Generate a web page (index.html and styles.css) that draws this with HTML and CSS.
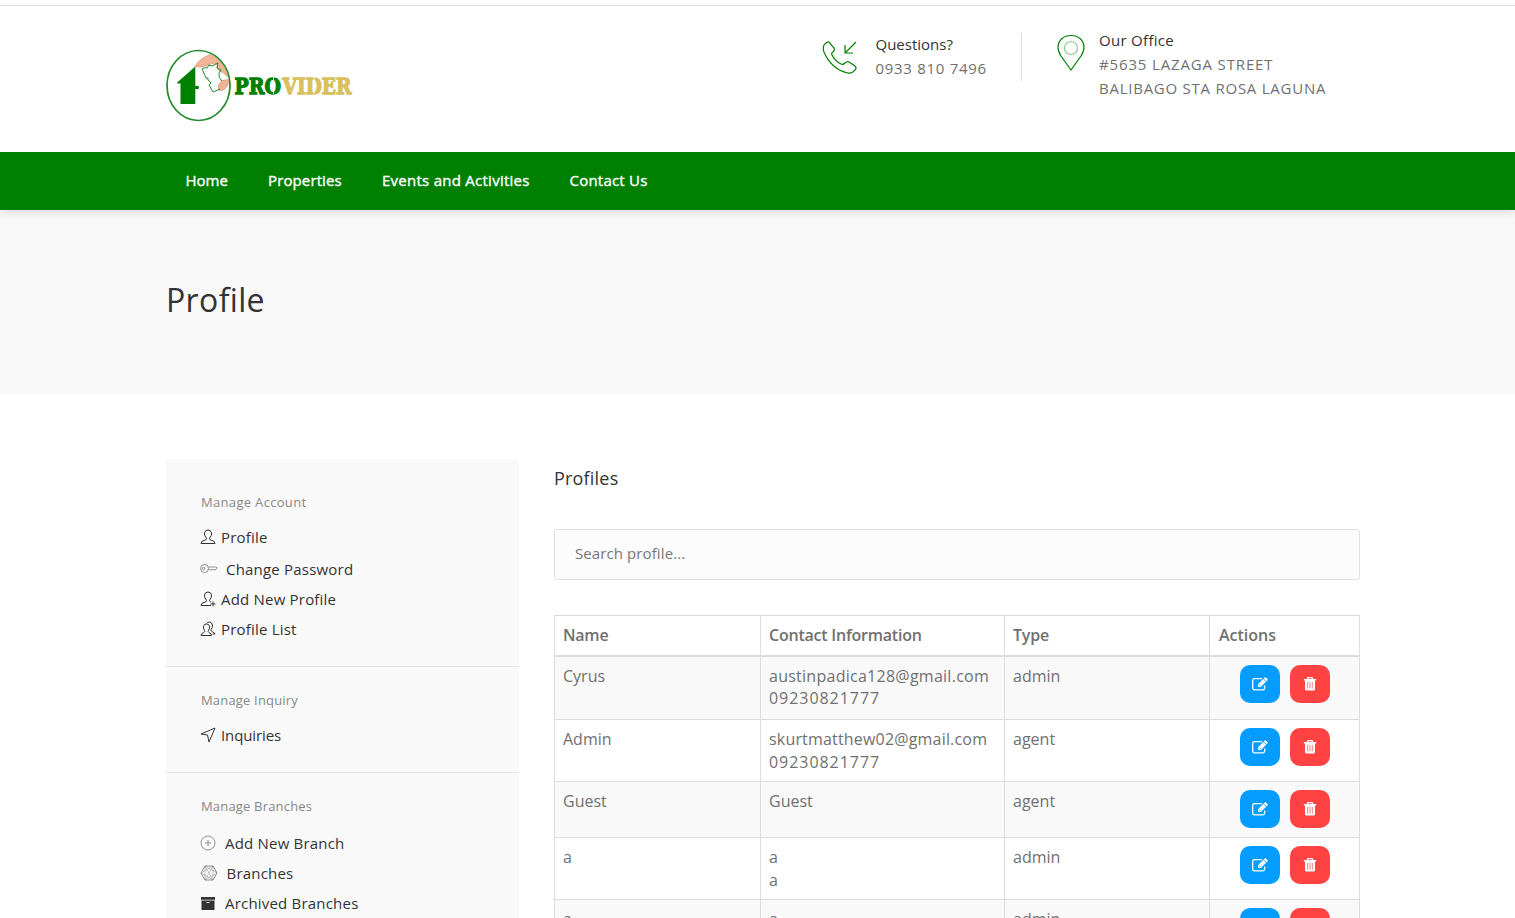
FILE: index.html
```html
<!DOCTYPE html>
<html lang="en">
<head>
<meta charset="utf-8">
<title>Profile</title>
<link rel="stylesheet" href="styles.css">
</head>
<body>
<svg class="sprite" aria-hidden="true">
  <symbol id="edit" viewBox="0 0 18 16"><path d="M13.700 9.500v2.500a1.800 1.800 0 0 1-1.800 1.800H3.500a1.800 1.800 0 0 1-1.800-1.800V4.400a1.800 1.800 0 0 1 1.800-1.800h7.500" fill="none" stroke="currentColor" stroke-width="1.3"/><path d="M7 11V8.200L13.700 1.500q.6-.6 1.200 0l1.600 1.600q.6.600 0 1.200L9.800 11z" fill="currentColor"/><path d="M8 8.500l1.500 1.500M12.500 2.800l2.700 2.700" stroke="#049dff" stroke-width=".9"/></symbol>
  <symbol id="trash" viewBox="0 0 14 16"><path d="M4.300 3L5 1.600h4L9.700 3" fill="none" stroke="currentColor" stroke-width="1.400"/><path d="M.8 2.900h12.400v1.500H.8zM2 4.400h10V13q0 1.500-1.300 1.500H3.300Q2 14.500 2 13z" fill="currentColor"/><path d="M4.700 6v6.500M7 6v6.500M9.300 6v6.500" stroke="#ff6b85" stroke-width=".9"/></symbol>
</svg>
<header class="header">
  <div class="container header-inner">
    <svg class="logo" viewBox="0 0 190 74" role="img">
      <ellipse cx="32.500" cy="36.500" rx="31.500" ry="35" fill="#fff" stroke="#228b2c" stroke-width="1.700"/>
      <path d="M29.300 17.500V55H14.500V34.500h-3.300v-1z" fill="#008000"/>
      <path d="M28 37h2.500q2.500-1 2.500 1.500t-2.500 1.500H28z" fill="#008000"/>
      <path d="M28.700 17.300Q34 9 44.500 5.500q7 3 12 10 4 6 5.500 12-3-1-5-4-4 0-6-5 1-3-1-4-4-1-9 2-6 3-12.300.8z" fill="#efb595" stroke="#d48e6e" stroke-width=".6"/>
      <path d="M63 30q0 6-4 10-4 3-6 1-2-3 0-6 3-5 7-4 1-1 3-1z" fill="#efb595" stroke="#d48e6e" stroke-width=".6"/>
      <path d="M36 20q2-2 5-1l2-3 3 1 6-3-1 5 4 2-2 3q-1 5 3 8M36 20l4 9q3-1 2 2l3 3-2 2 4 7 7-3" fill="none" stroke="#228b2c" stroke-width="1"/>
      <g class="logo-type"><text class="pro" x="68.500" y="44.500" textLength="46.500" lengthAdjust="spacingAndGlyphs">PRO</text><text class="vider" x="116.500" y="44.500" textLength="69" lengthAdjust="spacingAndGlyphs">VIDER</text></g>
      <path d="M107.500 27v18M148 27v18" stroke="#fff" stroke-width=".8"/>
    </svg>
    <div class="contact contact-phone">
      <svg class="icon-phone" viewBox="0 0 36 36"><path d="M2 5q3-4 5-3l5 6q1 2-1 4-2 1-1 3 3 6 9 9 2 1 4-1 2-2 4-1l6 4q2 2 0 4-3 4-7 3Q9 29 2 12 .5 8 2 5z"/><path d="M34 2L23 13M23 5v8h8"/></svg>
      <div><b>Questions?</b><span class="fit-tel">0933 810 7496</span></div>
    </div>
    <div class="contact contact-office">
      <svg class="icon-pin" viewBox="0 0 28 38"><path d="M14 36L4 22Q1 17 1 13.500C1 6 6.500 1.500 14 1.500S27 6 27 13.500Q27 17 24 22z"/><circle cx="14" cy="14" r="6.500" opacity=".45"/></svg>
      <div><b class="fit-office">Our Office</b><span class="fit-street">#5635 LAZAGA STREET</span><span class="fit-city">BALIBAGO STA ROSA LAGUNA</span></div>
    </div>
  </div>
</header>
<nav class="nav"><div class="container nav-inner"><a class="n1">Home</a><a class="n2">Properties</a><a class="n3">Events and Activities</a><a class="n4">Contact Us</a></div></nav>
<section class="titlebar"><div class="container"><h1>Profile</h1></div></section>
<main class="container main">
  <aside class="sidebar">
    <section>
      <h2>Manage Account</h2>
      <a><svg viewBox="0 0 16 16"><path d="M1 14.500h14q0-2.500-3-3-3-.7-2.500-2.200Q12 6.500 11.500 4 11 1 8 1T4.500 4q-.5 2.500 2 5.300.5 1.500-2.500 2.200-3 .5-3 3z"/></svg><span>Profile</span></a>
      <a class="key"><svg class="thin wide" viewBox="0 0 18 16"><circle cx="4.500" cy="7.500" r="4"/><circle cx="3.500" cy="7.500" r="1.200"/><path d="M8.500 6h8l.5 1.200-1 1.500H8.400"/></svg><span>Change Password</span></a>
      <a><svg viewBox="0 0 16 16"><path d="M11 14.500H1q0-2.500 3-3 3-.7 2.500-2.200Q4 6.500 4.500 4 5 1 8 1t3.500 3q.5 2.500-2 5.300 0 1.200 1.500 1.900M13 10.500v5M10.500 13h5"/></svg><span>Add New Profile</span></a>
      <a><svg viewBox="0 0 16 16"><path d="M1 14.500h10.500q0-2-2.500-3-1.500-.7-.5-2.200 1.500-2 1-4Q9 3 6.500 3T3.500 5.300q-.5 2 1 4 1 1.500-1 2.200-2.500 1-2.500 3zM6.500 2.500Q7.500 1 9.300 1 12 1 12.500 4q.3 2.500-1.500 4.500-.3 1.500 1.500 2.300Q15 12 15 13h-2.500"/></svg><span>Profile List</span></a>
    </section>
    <section>
      <h2>Manage Inquiry</h2>
      <a class="inquiries"><svg viewBox="0 0 16 16"><path d="M1 7L15 1 9 15 7.500 8z"/></svg><span>Inquiries</span></a>
    </section>
    <section class="branches">
      <h2>Manage Branches</h2>
      <a><svg class="thin g1" viewBox="0 0 16 16"><circle cx="8" cy="8" r="7"/><path d="M8 5v6M5 8h6"/></svg><span>Add New Branch</span></a>
      <a><svg class="thin wide g2" viewBox="0 0 18 16"><path d="M5 1h8l4 7-4 7H5L1 8z"/><path class="mesh" d="M5 1l8 14M13 1L5 15M5 1v14M13 1v14M1 8l12-7M1 8l12 7M17 8L5 1M17 8L5 15"/></svg><span>Branches</span></a>
      <a><svg class="g1" viewBox="0 0 16 16"><path class="solid" d="M1 2h14v2.700H1zM1.500 5.500h13V15h-13z"/><path d="M6.500 7.500h3" stroke="#fff"/></svg><span>Archived Branches</span></a>
    </section>
  </aside>
  <section class="content">
    <h2>Profiles</h2>
    <input class="search" type="text" placeholder="Search profile...">
    <table>
      <colgroup><col class="c1"><col class="c2"><col class="c3"><col class="c4"></colgroup>
      <thead><tr><th>Name</th><th>Contact Information</th><th>Type</th><th>Actions</th></tr></thead>
      <tbody>
        <tr class="first"><td>Cyrus</td><td><span class="email">austinpadica128@gmail.com</span><br><span class="digits">09230821777</span></td><td>admin</td><td><div class="actions"><button class="edit"><svg><use href="#edit"/></svg></button><button class="del"><svg><use href="#trash"/></svg></button></div></td></tr>
        <tr class="double"><td>Admin</td><td><span class="email-short">skurtmatthew02@gmail.com</span><br><span class="digits">09230821777</span></td><td>agent</td><td><div class="actions"><button class="edit"><svg><use href="#edit"/></svg></button><button class="del"><svg><use href="#trash"/></svg></button></div></td></tr>
        <tr class="single"><td>Guest</td><td>Guest</td><td>agent</td><td><div class="actions"><button class="edit"><svg><use href="#edit"/></svg></button><button class="del"><svg><use href="#trash"/></svg></button></div></td></tr>
        <tr class="double"><td>a</td><td>a<br>a</td><td>admin</td><td><div class="actions"><button class="edit"><svg><use href="#edit"/></svg></button><button class="del"><svg><use href="#trash"/></svg></button></div></td></tr>
        <tr class="double"><td>a</td><td>a<br>a</td><td>admin</td><td><div class="actions"><button class="edit"><svg><use href="#edit"/></svg></button><button class="del"><svg><use href="#trash"/></svg></button></div></td></tr>
      </tbody>
    </table>
  </section>
</main>
</body>
</html>
```
FILE: styles.css
```css
* { box-sizing: border-box; }
html, body { height: 918px; overflow: hidden; }
body { margin: 0; background: #fff; color: #707070; font: 15px/24px "Open Sans", "Noto Sans", sans-serif; }
h1, h2 { margin: 0; font-weight: 400; }
.sprite { display: none; }
.container { width: 1194px; margin-left: 166px; }

.header { height: 152px; padding-top: 5px; }
.header-inner { display: flex; }
.header::before { content: ""; display: block; height: 1px; background: #ddd; }
.logo { width: 190px; height: 74px; margin: 43px 466px 0 0; flex: none; }
.logo-type { font: bold 23px "DejaVu Serif", serif; }
.pro { fill: #008000; stroke: #008000; stroke-width: 1.3; }
.vider { fill: #d9c05c; stroke: #d9c05c; stroke-width: 1.3; }
.contact { display: flex; }
.contact b, .contact span { display: block; font-weight: 400; white-space: nowrap; }
.contact b { color: #333; }
.contact svg { fill: none; stroke: #008000; stroke-width: 1.2; flex: none; }
.contact-phone { width: 200px; height: 48px; margin-top: 27px; border-right: 1px solid #ddd; }
.contact-phone > div { margin: -1px 0 0 17.5px; }
.icon-phone { width: 36px; height: 36px; margin-top: 7px; }
.contact-office { margin: 22px 0 0 35px; }
.icon-pin { width: 28px; height: 38px; margin: 6px 14px 0 0; }
.fit-tel { letter-spacing: .7px; }
.fit-office { letter-spacing: .3px; }
.fit-street { letter-spacing: .85px; }
.fit-city { letter-spacing: .75px; }

.nav { position: relative; height: 58px; background: #008000; box-shadow: 0 1px 10px rgba(0, 0, 0, .15); clip-path: inset(0 0 -12px); }
.nav-inner { display: flex; gap: 40px; padding-left: 19.5px; }
.nav a { color: #fff; line-height: 56px; white-space: nowrap; -webkit-text-stroke: .35px #fff; }
.n1 { width: 42.5px; }
.n2 { width: 74px; letter-spacing: .12px; }
.n3 { width: 147.5px; letter-spacing: .26px; }
.n4 { letter-spacing: .22px; }
.titlebar { height: 184px; background: #f8f8f8; padding-top: 68px; }
.titlebar h1 { color: #333; font-size: 32px; line-height: 44px; letter-spacing: .35px; }

.main { display: flex; gap: 35px; padding-top: 65px; align-items: flex-start; }
.sidebar { width: 353px; height: 500px; background: #f9f9f9; border-radius: 3px; }
.sidebar section { padding: 23px 35px 22px; border-bottom: 1px solid #e4e4e4; }
.sidebar section:first-child { padding-top: 33px; }
.sidebar h2 { margin-bottom: 10px; color: #888; font-size: 13px; line-height: 20px; letter-spacing: .18px; }
.sidebar section:first-child h2 { letter-spacing: .32px; }
.sidebar .branches h2 { margin-bottom: 12px; }
.sidebar a { display: flex; height: 30px; color: #333; line-height: 30px; letter-spacing: .2px; }
.sidebar .inquiries { letter-spacing: -.1px; }
.sidebar .key { margin-top: 2px; }
.sidebar svg { width: 16px; height: 16px; margin: 7px 5px 0 -1px; fill: none; stroke: #333; stroke-width: 1; }
.sidebar svg.wide { width: 18px; margin-right: 8px; }
.sidebar svg.thin { stroke: #777; stroke-width: .8; }
.sidebar svg.g1 { margin-right: 9px; }
.sidebar svg.g2 { margin-right: 8.5px; }
.sidebar .mesh { stroke-width: .4; }
.solid { fill: #333; stroke: none; }

.content { width: 806px; }
.content h2 { padding-top: 7px; color: #333; font-size: 18px; line-height: 24px; letter-spacing: .2px; }
.search { display: block; width: 806px; height: 51px; margin: 39px 0 35px; padding: 0 20px 3px; border: 1px solid #e0e0e0; border-radius: 3px; background: #fcfcfc; font: 15px "Open Sans", sans-serif; letter-spacing: .1px; }
.search::placeholder { color: #777; opacity: 1; }
table { width: 806px; table-layout: fixed; border-collapse: collapse; font-size: 16px; line-height: 22.5px; }
.c1 { width: 206px; } .c2 { width: 244px; } .c3 { width: 205px; } .c4 { width: 150px; }
th, td { padding: 8px; border: 1px solid #ddd; text-align: left; vertical-align: top; white-space: nowrap; }
th { height: 40px; border-bottom-width: 2px; font-weight: 600; letter-spacing: -.22px; }
th:last-child { padding-left: 9px; letter-spacing: 0; }
tbody tr:nth-child(odd) { background: #f9f9f9; }
.first { height: 64px; }
.double { height: 62px; }
.single { height: 56px; }
.email { letter-spacing: .26px; }
.email-short { letter-spacing: .18px; }
.digits { letter-spacing: .95px; }
.actions { display: flex; justify-content: center; gap: 10px; height: 38px; }
button { display: flex; align-items: center; justify-content: center; width: 40px; height: 38px; padding: 0; border: 0; border-radius: 10px; color: #fff; }
.edit { background: #049dff; }
.del { background: #ff4343; }
.edit svg { width: 18px; height: 16px; }
.del svg { width: 14px; height: 16px; }
```
